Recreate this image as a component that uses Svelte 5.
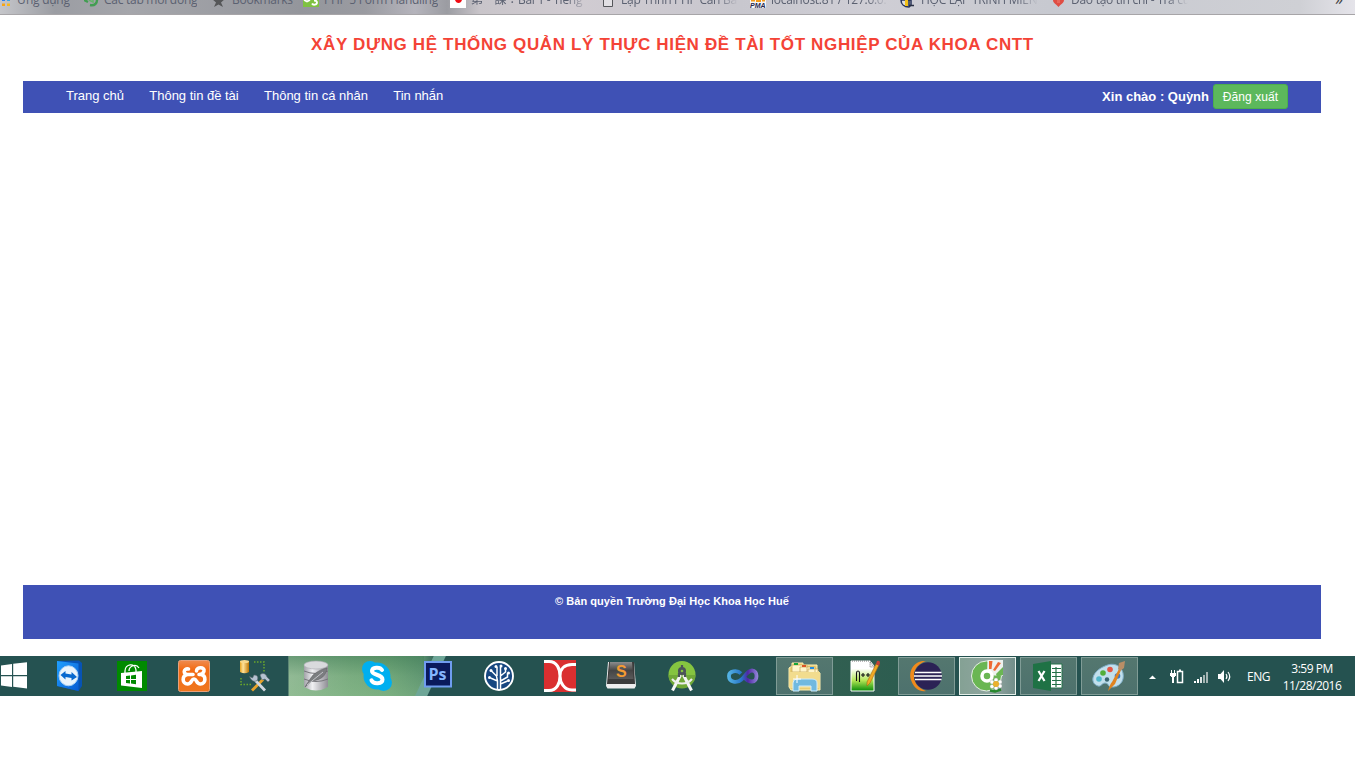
<script>
  const bookmarks = [
    { icon: 'apps', text: 'Ứng dụng', w: 84, s: 17 },
    { icon: 'tab', text: 'Các tab mới đóng', w: 128, s: 20 },
    { icon: 'star', text: 'Bookmarks', w: 91, s: 20 },
    { icon: 'w3', text: 'PHP 5 Form Handling', w: 147, s: 21 },
    { icon: 'flag', text: '第一課：Bài 1 - Tiếng', w: 153, s: 21, fade: true, cut: 117 },
    { icon: 'page', text: 'Lập Trình PHP Căn Bản', w: 147, s: 18, fade: true, cut: 117 },
    { icon: 'pma', text: 'localhost:81 / 127.0.0.1', w: 150, s: 21, fade: true, cut: 117 },
    { icon: 'tl', text: 'HỌC LẬP TRÌNH MIỄN', w: 152, s: 21, fade: true, cut: 117 },
    { icon: 'pin', text: 'Đào tạo tín chỉ - Tra cứu', w: 150, s: 19, fade: true, cut: 117 }
  ];
  const menu = ['Trang chủ', 'Thông tin đề tài', 'Thông tin cá nhân', 'Tin nhắn'];
  const apps = ['team', 'store', 'xampp', 'tools', 'db', 'skype', 'ps', 'tree', 'dx', 'subl', 'android', 'vs', 'files', 'npp', 'eclipse', 'coc', 'excel', 'paint'];
  const open = ['files', 'eclipse', 'excel', 'paint'];
</script>

<div class="screen">
  <div class="bookmarks">
    {#each bookmarks as b}
      <div class="bm" style="width:{b.w}px">
        <span class="slot" style="width:{b.s}px">
          <svg width="17" height="14" viewBox="0 0 17 14">
            {#if b.icon === 'apps'}
              <path d="M2 0h3v1H2z" fill="#2d7ff0" /><path d="M2 3.500h3v2.500H2z" fill="#f7a516" /><path d="M7 0h3v1H7z" fill="#39a4e8" /><path d="M7 3.500h3v2.500H7z" fill="#f7b81c" />
            {:else if b.icon === 'tab'}
              <path d="M0 0l4 2M6 5c5 1 7-2 7-5" fill="none" stroke="#429d52" stroke-width="2.400" /><path d="M5 0l4 2v-2" fill="none" stroke="#64b66b" stroke-width="1.500" />
            {:else if b.icon === 'star'}
              <path d="M0-1h13L9 2.500 11 7 6.500 4.500 2 7 4 2.500z" fill="#555658" />
            {:else if b.icon === 'w3'}
              <path d="M0 0h16v7H0z" fill="#7fc241" /><path d="M1 0l3 1.500L7 0M9 3.500c1 2 5 1.500 5-1 0-1.500-1-2-3-2" fill="none" stroke="#fff" stroke-width="1.800" />
            {:else if b.icon === 'flag'}
              <path d="M0 0h16v8H0z" fill="#fff" /><path d="M5 0h7q-1 3-3.500 3T5 0" fill="#f10b12" />
            {:else if b.icon === 'page'}
              <path d="M.5-2h9v8.500h-9z" fill="#e2e0e4" stroke="#55565a" />
            {:else if b.icon === 'pma'}
              <path d="M0 0h16v8H0z" fill="#f5f5f7" /><path d="M1 .5h4M6 1h5M12 .5h3" stroke="#f39a18" stroke-width="2" /><text x="0" y="8" class="logo">PMA</text>
            {:else if b.icon === 'tl'}
              <path d="M1 0c0 4 3 7 8 7l2-2V0z" fill="#ddd" stroke="#263258" stroke-width="1.500" /><path d="M5 0h3v6H5z" fill="#f2c017" /><path d="M9 0v5.500h5" fill="none" stroke="#293044" stroke-width="1.500" />
            {:else}
              <path d="M1 0h11c0 3-3 4-5.500 7C4 4 1 3 1 0" fill="#df4d43" /><path d="M5 0h3v3H5z" fill="#e8675c" />
            {/if}
          </svg>
        </span>
        <span class="bmt" class:fade={b.fade} style={b.cut ? `width:${b.cut}px` : ''}>{b.text}</span>
      </div>
    {/each}
    <span class="more">»</span>
  </div>

  <h1><span>XÂY DỰNG HỆ THỐNG QUẢN LÝ THỰC HIỆN ĐỀ TÀI TỐT NGHIỆP CỦA KHOA CNTT</span></h1>

  <nav>
    {#each menu as m}<a href="#top">{m}</a>{/each}
    <div class="user"><b>Xin chào : Quỳnh</b><button>Đăng xuất</button></div>
  </nav>

  <main></main>
  <footer>© Bản quyền Trường Đại Học Khoa Học Huế</footer>

  <div class="taskbar">
    <svg class="start" width="44" height="40" viewBox="0 0 44 40"><path d="M1 9.500L12 8v11H1zM13.200 7.800L27 6.300V19H13.200zM1 20.300h11V31L1 29.500zM13.200 20.300H27v12.200l-13.800-1.700z" fill="#fff" /></svg>
    <div class="apps">
      {#each apps as a}
        <div class="app" class:open={open.includes(a)} class:active={a === 'coc'}>
          <svg width="57" height="40" viewBox="0 0 57 40">
            {#if a === 'team'}
              <defs><linearGradient id="tv" x1="0" y1="0" x2="1" y2="1"><stop offset="0" stop-color="#20a0ff" /><stop offset="1" stop-color="#075bd2" /></linearGradient></defs>
              <path d="M13 5l22-.5 3 2.500v23l-3.500 5L13 30z" fill="#0753b5" /><path d="M13 5l21.500 2.500V35L13 30z" fill="url(#tv)" />
              <ellipse cx="24.500" cy="19.800" rx="9.500" ry="10" fill="#eaf4fc" stroke="#a9d1f4" />
              <path d="M16.500 19l5-4v2.500l6 1V16l5.500 5-5.500 3.500V22l-6-1v2.500z" fill="#0869cf" />
            {:else if a === 'store'}
              <path d="M12 5h30v30H12z" fill="#008a00" /><path d="M16 17l21-2v17l-21-2.500z" fill="#fff" />
              <path d="M20 17v-2c0-7 10-9 11-1v2M24 15c0-5 7-8 10-3" fill="none" stroke="#fff" stroke-width="1.300" />
              <path d="M21 20l4-.5v3.500h-4zm5-.6l5-.6V23h-5zM21 24h4v3.500l-4-.5zm5 0h5v4.300l-5-.7z" fill="#008a00" />
            {:else if a === 'xampp'}
              <defs><linearGradient id="xp" x1="0" y1="0" x2="0" y2="1"><stop offset="0" stop-color="#ef8b50" /><stop offset=".3" stop-color="#f36b13" /><stop offset="1" stop-color="#ef761e" /></linearGradient></defs>
              <rect x="12.500" y="4.500" width="31" height="31" rx="2" fill="url(#xp)" stroke="#e8a27b" />
              <path d="M22.500 13C17 12 17 18.500 21.500 18.500H27M30.500 15c0-4.500 8.500-4 7.500 0-.5 3-3 3.500-5 3.500M21.500 18.500c-6 1-5.500 9.500 0 9.500 4.500 0 3.500-5 6.500-5s2 5 6.500 5c5.500 0 6-8.500.5-9.500" fill="none" stroke="#fff" stroke-width="3.600" stroke-linecap="round" />
            {:else if a === 'tools'}
              <defs><linearGradient id="gold"><stop offset="0" stop-color="#e5a321" /><stop offset=".35" stop-color="#ffe39a" /><stop offset="1" stop-color="#bd7603" /></linearGradient></defs>
              <path d="M13 5v11q4.500 2.500 9 0V5z" fill="url(#gold)" /><ellipse cx="17.500" cy="5.500" rx="4.500" ry="1.500" fill="#f8d98c" />
              <path d="M27 6h10v11M14 22v6.500h10" fill="none" stroke="#69a52c" stroke-width="1.500" stroke-dasharray="1.500 1.500" />
              <path d="M25 34.500l11-11" stroke="#e7a329" stroke-width="2.800" /><path d="M27 23l11 11.500" stroke="#d0d7df" stroke-width="2.800" /><path d="M22.500 20.500l3 1.500 1.500-3c4 0 4.500 3 3 5.500-3 2-6 0-7.500-4M33 19c3-3 6-1 7 2l3 3-2 2-3-3-3 1z" fill="#b6c2d0" stroke="#59666f" stroke-width=".6" />
            {:else if a === 'db'}
              <defs><linearGradient id="silver"><stop offset="0" stop-color="#a2a2a8" /><stop offset=".35" stop-color="#f0f0f3" /><stop offset="1" stop-color="#8f8e95" /></linearGradient></defs>
              <path d="M16 9v22q12 7 24 0V9z" fill="url(#silver)" /><ellipse cx="28" cy="9" rx="12" ry="4" fill="#d9dadd" stroke="#aaa9b0" stroke-width=".6" />
              <path d="M16 15q12 5 24 0M16 23q12 5 24 0" fill="none" stroke="#77777c" /><path d="M17 31c3-5 5-8 8-12 5-4 9-6 14-7-1 8-6 12-15 13z" fill="#7b7d80" stroke="#5c5d60" stroke-width=".5" /><path d="M19 29l16-13" stroke="#d5d5da" stroke-width=".8" />
            {:else if a === 'skype'}
              <circle cx="21" cy="13" r="8" fill="#00aff0" /><circle cx="34.500" cy="26.500" r="8.500" fill="#00aff0" /><circle cx="28" cy="20" r="13.500" fill="#00aff0" />
              <path d="M33 14c-2-3.500-10-3-10 1 0 4.500 10.500 3 10.500 8.500 0 4.500-9 5-11 .8" fill="none" stroke="#fff" stroke-width="4" stroke-linecap="round" />
            {:else if a === 'ps'}
              <path d="M15 6h26v24.500H15z" fill="#0a1a5c" stroke="#6f9cf0" stroke-width="2" /><text x="18.500" y="23.500" class="ps">Ps</text>
            {:else if a === 'tree'}
              <circle cx="28" cy="20" r="14" fill="#174781" stroke="#fff" stroke-width="1.900" />
              <g fill="none" stroke="#fff" stroke-width="1.500"><path d="M26.500 34V25l-7-3M29.500 34V25l7-4v-4M26.500 25l-1-5-5-5M29.500 25V11M29.500 20l5-4v-4M26 20v-9M29.500 28l7-3" /></g>
              <g fill="#fff"><circle cx="20" cy="14.500" r="1.500" /><circle cx="25" cy="10.500" r="1.500" /><circle cx="30" cy="10" r="1.500" /><circle cx="34.500" cy="12.500" r="1.500" /><circle cx="37.500" cy="17" r="1.500" /><circle cx="18.500" cy="21.500" r="1.500" /><circle cx="37.500" cy="24.500" r="1.500" /></g>
            {:else if a === 'dx'}
              <path d="M12 4h32v32H12z" fill="#da2f30" /><path d="M12 5.500h5C25 5.500 28 13 28 20s-3 14.500-11 14.500h-5M44 8.500h-4c-8 0-12 5-12 11.500s4 14 12 14h4" fill="none" stroke="#fff" stroke-width="3" />
            {:else if a === 'subl'}
              <defs><linearGradient id="key" x1="0" y1="0" x2="0" y2="1"><stop offset="0" stop-color="#8d8d8d" /><stop offset=".5" stop-color="#454545" /><stop offset="1" stop-color="#5a5a5a" /></linearGradient></defs>
              <path d="M15 6h26l2 24-1.500 2.500h-27L13 30z" fill="#eee" /><path d="M16 6h25l1 22H14z" fill="#3b3b3b" /><path d="M17 6h22l1.500 17h-25z" fill="url(#key)" /><text x="23" y="21" class="subl">S</text>
            {:else if a === 'android'}
              <circle cx="28" cy="18.500" r="13.500" fill="#85c440" /><path d="M14.500 19h27a13.500 13.500 0 0 1-27 0" fill="#70a838" />
              <path d="M26.500 19l-8 15.500M29.500 19l8 15.500" stroke="#f6f6f6" stroke-width="3" /><path d="M18 23c5 6 15 6 20 0" stroke="#eee" stroke-width="2" fill="none" /><circle cx="28" cy="15" r="2.700" fill="none" stroke="#4b5359" stroke-width="2.700" /><path d="M28 9v3M25 17v4M31 17v4" stroke="#4b5359" stroke-width="2.200" />
            {:else if a === 'vs'}
              <defs><linearGradient id="inf" gradientUnits="userSpaceOnUse" x1="12" y1="0" x2="44" y2="0"><stop offset="0" stop-color="#58b9e8" /><stop offset=".45" stop-color="#2876c8" /><stop offset=".65" stop-color="#4f27a4" /><stop offset="1" stop-color="#9a90e0" /></linearGradient></defs>
              <path d="M26 17.500c-4-4-12-2.500-12 2.500 0 6.500 8 7.500 12.500 3.500 3.500-3 6-9 10.500-9 6 0 6 11 0 11-3 0-6-2-8-4.500" fill="none" stroke="url(#inf)" stroke-width="3.800" />
            {:else if a === 'files'}
              <path d="M13 12l3-2V7h11v2h14v5l3 3v17H15l-2-3z" fill="#e8cd73" stroke="#fff0b2" /><path d="M16 9h15v7H16zM24 11h15v6H24zM32 13h10v6H32z" fill="#fff5cb" stroke="#c5a653" stroke-width=".7" />
              <path d="M18 7h4v2h-4z" fill="#16a53a" /><path d="M26 9h4v2h-4z" fill="#dc5525" /><path d="M34 11h4v2h-4z" fill="#268ee0" /><path d="M13 16h31v16H14z" fill="#f2dc8e" /><path d="M17 35v-8q0-4 4-4h15q5 0 5 4v8h-6v-5H23v5z" fill="#70b9df" stroke="#cfedfc" stroke-width="1" /><path d="M17 23h8M21 19v8" stroke="#fff" stroke-width="1" />
            {:else if a === 'npp'}
              <defs><linearGradient id="np" x1="0" y1="0" x2="0" y2="1"><stop offset=".25" stop-color="#fff" /><stop offset=".65" stop-color="#b2e654" /><stop offset="1" stop-color="#078b09" /></linearGradient></defs>
              <path d="M14 5h19l4 5v25H14z" fill="url(#np)" stroke="#fff" /><path d="M15 5h19M33 6l4 5h-4z" stroke="#777" stroke-dasharray="1 1" fill="#eee" /><path d="M19.500 25v-8q0-2 1.500-2t1.500 2v9M24 19h4M26 17v4M29 19h4M31 17v4" fill="none" stroke="#111" stroke-width="1.100" /><path d="M30 26L39 8l3 1-9 18-3 3z" fill="#f0ab24" stroke="#a66410" stroke-width=".6" /><path d="M39 8l1-3q3-1 3 2l-1 3z" fill="#c43f36" />
            {:else if a === 'eclipse'}
              <path d="M28 5C16 4 10 15 13 24c3 9 9 12 15 11-8-3-13-9-12-17 1-7 6-11 12-13" fill="#f18a1c" /><circle cx="30" cy="20" r="13.800" fill="#2b2255" /><path d="M17 16.500h26.500M16 20H44M17 23.500h26.500" stroke="#fff" stroke-width="1.600" />
            {:else if a === 'coc'}
              <circle cx="27.500" cy="20" r="15" fill="#6ab653" stroke="#e5eee6" stroke-width="1" /><path d="M28 19l.5-15H44v16z" fill="#edf1ee" /><path d="M30 13V5h3.500l-1 8zM34 14l5-8 3 1-6 8z" fill="#ee6a34" /><path d="M37 18l7-7v8l-6 2z" fill="#6ab653" /><circle cx="28" cy="20" r="5" fill="#6ab653" stroke="#fff" stroke-width="3.500" />
              <path d="M36 30v5.500M31 34.500l5 1 6-2" stroke="#27882e" stroke-width="2.500" /><g fill="#fff" stroke="#999" stroke-width=".3"><circle cx="37" cy="24" r="2" /><circle cx="41" cy="26" r="2" /><circle cx="41" cy="30" r="2" /><circle cx="37" cy="32" r="2" /><circle cx="33" cy="30.500" r="2" /><circle cx="33" cy="26" r="2" /></g><circle cx="37" cy="28" r="3" fill="#eab02c" />
            {:else if a === 'excel'}
              <path d="M29 8h13v24H29z" fill="#fff" stroke="#27724a" /><path d="M32 12.500h9M32 16.500h9M32 20.500h9M32 24.500h9M32 28.500h9M36 11v20" stroke="#237047" stroke-width="1.200" /><path d="M13 8l18-3v30l-18-3z" fill="#1f7245" /><path d="M18.500 15l6 10M24.500 15l-6 10" stroke="#fff" stroke-width="2.200" />
            {:else}
              <path d="M24 10c8-4 16-1 18 7 2 9-5 15-12 14-3 0-2-4-6-4-3 0-4 4-7 3-9-3-6-15 7-20" fill="#c2dfec" stroke="#7dacc5" /><circle cx="29" cy="13.500" r="2.800" fill="#e45645" /><circle cx="22" cy="17" r="2.800" fill="#51ae39" /><circle cx="18" cy="23" r="2.800" fill="#51b6cb" /><circle cx="36.500" cy="20" r="2.800" fill="#3b77c5" /><circle cx="26" cy="23.500" r="2.200" fill="#386470" />
              <path d="M27 35q2-7 4-9l7-13 2 1-6 14z" fill="#e08320" /><path d="M37 13l1-6 6-2-1 7-4 3z" fill="#b98e66" />
            {/if}
          </svg>
        </div>
      {/each}
    </div>
    <svg class="tray" width="101" height="40" viewBox="0 0 101 40">
      <path d="M11 23l3.500-3.500L18 23z" fill="#fff" />
      <path d="M39.500 15.500h5v11h-5z" fill="none" stroke="#fff" stroke-width="1.500" /><path d="M41 13.500h2v1.500h-2zM33 14h1v3h2v-3h1v3h1v3h-1v1h-1v6h-2v-6h-1v-1h-1v-3h1z" fill="#fff" />
      <path d="M56 25h2v2h-2zM59 23h2v4h-2z" fill="#fff" /><path d="M62 21h2v6h-2z" fill="#dce4e3" /><path d="M65 19h2v8h-2zM68 16h2v11h-2z" fill="#a4b4b3" />
      <path d="M80 18h2.500l3.500-4v13l-3.500-4H80z" fill="#fff" /><path d="M88 18q2 2.500 0 5M90 16q3.500 4.500 0 9" fill="none" stroke="#fff" stroke-width="1.100" />
    </svg>
    <span class="lang">ENG</span>
    <div class="clock"><span>3:59 PM</span><span>11/28/2016</span></div>
  </div>
</div>

<style>
  :global(body) { margin: 0; background: #fff; overflow: hidden; }
  .screen { width: 1366px; height: 768px; background: #fff; font-family: "Liberation Sans", Arial, sans-serif; overflow: hidden; }
  .bookmarks { width: 1355px; height: 15px; box-sizing: border-box; border-bottom: 1px solid #a7a5a8; display: flex; overflow: hidden; background: linear-gradient(90deg, #c5c6ca 0, #9b9da3 55px, #a5a6ab 130px, #94969c 300px, #9a9ba1 365px, #b5b4bc 415px, #9b9ca2 447px, #c9c5ca 480px, #d1ccd2 570px, #c8c7ce 740px, #cfced5 870px, #c7c9d0 1050px, #cfd0d5 1300px, #e5e4ea 1355px); color: #5b6171; font-family: "Open Sans", "Noto Sans CJK JP", sans-serif; font-size: 12px; letter-spacing: -0.27px; }
  .bm { display: flex; flex: none; height: 14px; }
  .slot { flex: none; height: 14px; }
  .slot svg { display: block; }
  .bmt { white-space: nowrap; line-height: 18px; margin-top: -9px; height: 23px; overflow: hidden; }
  .fade { mask-image: linear-gradient(90deg, #000 82%, transparent 100%); }
  .more { margin-left: 133px; line-height: 18px; margin-top: -10px; font-size: 16px; color: #444; }
  .logo { font: italic bold 7px "Liberation Sans", sans-serif; fill: #26264d; letter-spacing: 0; }
  h1 { margin: 0; height: 66px; width: 1345px; text-align: center; font-size: 17px; line-height: 60px; color: #f44336; letter-spacing: 0.64px; white-space: nowrap; }
  nav { margin-left: 23px; width: 1298px; box-sizing: border-box; height: 32px; background: #3f51b5; display: flex; padding: 0 33px 0 43px; gap: 25.3px; }
  nav a { color: #fff; text-decoration: none; font-size: 13px; line-height: 29px; white-space: nowrap; letter-spacing: -0.01px; }
  .user { margin-left: auto; display: flex; gap: 4px; color: #fff; font-size: 13px; line-height: 31px; white-space: nowrap; }
  button { margin: 3px 0 0; width: 75px; height: 25px; box-sizing: border-box; padding: 0; border: 1px solid #4cae4c; border-radius: 3px; background: #5cb85c; color: #fff; font: 12px "Liberation Sans", sans-serif; letter-spacing: 0.1px; }
  main { height: 472px; }
  footer { margin-left: 23px; width: 1298px; height: 54px; background: #3f51b5; color: #fff; text-align: center; font-weight: bold; font-size: 11px; line-height: 32px; letter-spacing: 0.04px; }
  .taskbar { margin-top: 17px; width: 1355px; height: 40px; display: flex; color: #fff; font-family: "Open Sans", sans-serif; font-size: 12px; background: linear-gradient(115deg, transparent 0 50px, #6ea697 51px 61px, #255250 62px) 378px 0 / 90px 40px no-repeat, linear-gradient(180deg, #3f7b5580, #7bb08022 50%, #8bbd8c66) 289px 0 / 135px 40px no-repeat, linear-gradient(90deg, #315f51, #2d5d50) 830px 0 / 68px 40px no-repeat, linear-gradient(90deg, #255251 0 288px, #95bb98 289px, #7aac80 350px, #6fa578 390px, #5c9370 422px, #255250 440px); }
  .start { flex: none; }
  .apps { display: flex; gap: 4px; flex: none; }
  .app { width: 57px; height: 40px; }
  .app svg { display: block; }
  .open { background: linear-gradient(180deg, #54776f, #4d716d); box-shadow: inset 0 0 0 1px #809c96; }
  .open, .active { height: 38px; margin-top: 1px; }
  .open svg, .active svg { margin-top: -1px; }
  .active { background: linear-gradient(90deg, #84a194, #90a5a0 60%, #718d89); box-shadow: inset 0 0 0 1px #e4efe9; }
  .ps { font: bold 16px "Open Sans", sans-serif; fill: #83b5ff; }
  .subl { font: bold 16px "Liberation Sans", sans-serif; fill: #f49b32; }
  .tray { flex: none; }
  .lang { line-height: 41px; margin-left: 8px; width: 29px; letter-spacing: -0.5px; }
  .clock { display: flex; flex-direction: column; align-items: center; width: 72px; padding-top: 4px; line-height: 17px; letter-spacing: -0.5px; }
</style>
